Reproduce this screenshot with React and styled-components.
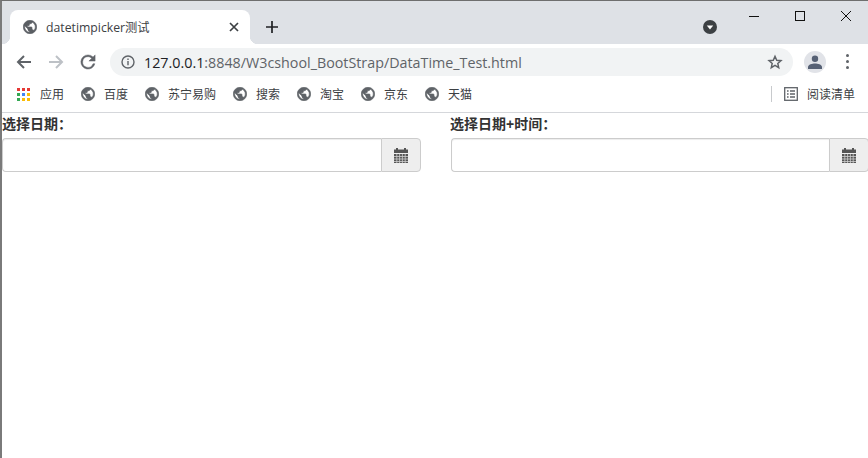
import React from "react";
import styled, { createGlobalStyle } from "styled-components";

const GlobalStyle = createGlobalStyle`
  html, body {
    margin: 0;
    padding: 0;
    background: #fff;
    overflow: hidden;
  }
  body {
    font-family: "Open Sans", "Noto Sans CJK SC", sans-serif;
  }
`;

const bookmarks = ["百度", "苏宁易购", "搜索", "淘宝", "京东", "天猫"];
const appColors = ["#e53935", "#e53935", "#e53935", "#34a853", "#4285f4", "#fbbc05", "#34a853", "#fbbc05", "#fbbc05"];

const Globe = ({ size = 14, color = "#5f6368" }) => (
  <svg width={size} height={size} viewBox="1.5 1.5 21 21" fill={color} stroke={color} strokeWidth="1">
    <path d="M12 2C6.48 2 2 6.48 2 12s4.48 10 10 10 10-4.48 10-10S17.52 2 12 2zm-1 17.93c-3.95-.49-7-3.85-7-7.93 0-.62.08-1.21.21-1.79L9 15v1c0 1.1.9 2 2 2v1.93zm6.9-2.54c-.26-.81-1-1.39-1.9-1.39h-1v-3c0-.55-.45-1-1-1H8v-2h2c.55 0 1-.45 1-1V7h2c1.1 0 2-.9 2-2v-.41c2.93 1.19 5 4.06 5 7.41 0 2.08-.8 3.97-2.1 5.39z" />
  </svg>
);

const CalendarIcon = () => (
  <svg width="14" height="15" viewBox="0 0 14 15">
    <rect x="2" y="0" width="2" height="3" fill="#555" />
    <rect x="10" y="0" width="2" height="3" fill="#555" />
    <rect x="0" y="1.5" width="14" height="3.5" fill="#555" />
    <rect x="0" y="6" width="14" height="9" fill="#555" />
    <path d="M0 8.5h14M0 11h14M0 13.5h14M2.8 6v9M5.6 6v9M8.4 6v9M11.2 6v9" stroke="#cfcfcf" strokeWidth="0.8" />
  </svg>
);

function App() {
  return (
    <Win>
      <GlobalStyle />
      <TabStrip>
        <Tab>
          <Globe size={14} color="#5a5e63" />
          <TabTitle>datetimpicker测试</TabTitle>
          <svg width="10" height="10" viewBox="0 0 10 10" stroke="#3c4043" strokeWidth="1.7">
            <path d="M1 1l8 8M9 1l-8 8" />
          </svg>
        </Tab>
        <NewTab>
          <svg width="12" height="12" viewBox="0 0 12 12" stroke="#202124" strokeWidth="1.7">
            <path d="M6 0v12M0 6h12" />
          </svg>
        </NewTab>
        <TabSearch>
          <svg width="14" height="14" viewBox="0 0 14 14">
            <circle cx="7" cy="7" r="7" fill="#3c4043" />
            <path d="M3.8 5.6h6.4L7 9.4z" fill="#fff" />
          </svg>
        </TabSearch>
        <WinControls>
          <svg width="10" height="10" viewBox="0 0 10 10" stroke="#111" strokeWidth="1">
            <path d="M0 5.5h10" />
          </svg>
          <svg width="10" height="10" viewBox="0 0 10 10" stroke="#111" strokeWidth="1" fill="none">
            <rect x="0.5" y="0.5" width="9" height="9" />
          </svg>
          <svg width="10" height="10" viewBox="0 0 10 10" stroke="#111" strokeWidth="1">
            <path d="M0 0l10 10M10 0L0 10" />
          </svg>
        </WinControls>
      </TabStrip>

      <Toolbar>
        <NavIcon>
          <svg width="16" height="16" viewBox="0 0 16 16" fill="none" stroke="#5f6368" strokeWidth="2">
            <path d="M15 8H2M8 2L2 8l6 6" />
          </svg>
        </NavIcon>
        <NavIcon>
          <svg width="16" height="16" viewBox="0 0 16 16" fill="none" stroke="#bdc1c6" strokeWidth="2">
            <path d="M1 8h13M8 2l6 6-6 6" />
          </svg>
        </NavIcon>
        <NavIcon>
          <svg width="16" height="16" viewBox="3 3 18 18" fill="#5f6368" stroke="#5f6368" strokeWidth="0.5">
            <path d="M17.65 6.35A7.96 7.96 0 0 0 12 4a8 8 0 1 0 7.73 10h-2.08A6 6 0 1 1 12 6c1.66 0 3.14.69 4.22 1.78L13 11h7V4l-2.35 2.35z" />
          </svg>
        </NavIcon>
        <Omnibox>
          <svg width="14" height="14" viewBox="0 0 14 14" fill="none" stroke="#5f6368" strokeWidth="1.4">
            <circle cx="7" cy="7" r="6" />
            <path d="M7 6v4.2M7 3.5v1.4" />
          </svg>
          <Url>
            127.0.0.1<UrlMuted>:8848/W3cshool_BootStrap/DataTime_Test.html</UrlMuted>
          </Url>
          <svg width="16" height="16" viewBox="0 0 24 24" fill="none" stroke="#5f6368" strokeWidth="2.2" strokeLinejoin="miter">
            <path d="M12 3.5l2.6 5.9 6.4.6-4.8 4.2 1.4 6.3L12 17.2l-5.6 3.3 1.4-6.3L3 10l6.4-.6z" />
          </svg>
        </Omnibox>
        <Avatar>
          <svg width="14" height="14" viewBox="0 0 14 14" fill="#566074">
            <circle cx="7" cy="3.8" r="3.2" />
            <path d="M0 14v-2c0-2.6 4.4-3.6 7-3.6s7 1 7 3.6v2z" />
          </svg>
        </Avatar>
        <Dots>
          <Dot />
          <Dot />
          <Dot />
        </Dots>
      </Toolbar>

      <BookmarkBar>
        <Apps>
          {appColors.map((c, i) => (
            <AppCell key={i} $color={c} />
          ))}
        </Apps>
        <AppsLabel>应用</AppsLabel>
        {bookmarks.map((b) => (
          <Bookmark key={b}>
            <Globe />
            <span>{b}</span>
          </Bookmark>
        ))}
        <ReadingList>
          <svg width="14" height="14" viewBox="0 0 14 14" fill="none" stroke="#5f6368" strokeWidth="1.3">
            <rect x="0.7" y="0.7" width="12.6" height="12.6" />
            <path d="M3 4h1.6M6 4h5M3 7h1.6M6 7h5M3 10h1.6M6 10h5" />
          </svg>
          <span>阅读清单</span>
        </ReadingList>
      </BookmarkBar>

      <Page>
        <Field>
          <Label>选择日期：</Label>
          <InputGroup>
            <Input type="text" />
            <Addon>
              <CalendarIcon />
            </Addon>
          </InputGroup>
        </Field>
        <Field $second>
          <Label>选择日期+时间：</Label>
          <InputGroup $second>
            <Input type="text" />
            <Addon>
              <CalendarIcon />
            </Addon>
          </InputGroup>
        </Field>
      </Page>
    </Win>
  );
}

const Win = styled.div`
  width: 868px;
  height: 458px;
  box-sizing: border-box;
  border-top: 1px solid #6e6e6e;
  border-left: 2px solid #7a7a7a;
  display: flex;
  flex-direction: column;
  overflow: hidden;
  background: #fff;
`;

const TabStrip = styled.div`
  height: 43px;
  flex: none;
  background: #dee1e6;
  display: flex;
  align-items: flex-end;
  padding-left: 8px;
`;

const Tab = styled.div`
  position: relative;
  width: 240px;
  height: 34px;
  box-sizing: border-box;
  background: #fff;
  border-radius: 8px 8px 0 0;
  display: flex;
  align-items: center;
  padding: 0 11px 0 13px;
  &::before,
  &::after {
    content: "";
    position: absolute;
    bottom: 0;
    width: 8px;
    height: 8px;
  }
  &::before {
    left: -8px;
    background: radial-gradient(circle at 0 0, #dee1e6 8px, #fff 8.5px);
  }
  &::after {
    right: -8px;
    background: radial-gradient(circle at 100% 0, #dee1e6 8px, #fff 8.5px);
  }
`;

const TabTitle = styled.span`
  flex: 1;
  margin-left: 9px;
  font-size: 12.25px;
  color: #3c4043;
  white-space: nowrap;
`;

const NewTab = styled.div`
  width: 12px;
  height: 12px;
  margin: 0 0 11px 16px;
  display: flex;
`;

const TabSearch = styled.div`
  margin: 0 0 10px 425px;
  display: flex;
`;

const WinControls = styled.div`
  align-self: flex-start;
  margin: 10px 0 0 32px;
  display: flex;
  gap: 36px;
  svg {
    display: block;
  }
`;

const Toolbar = styled.div`
  height: 32px;
  flex: none;
  display: flex;
  align-items: flex-end;
  padding-left: 6px;
`;

const NavIcon = styled.div`
  width: 32px;
  height: 28px;
  display: flex;
  align-items: center;
  justify-content: flex-start;
  padding-left: 8px;
  box-sizing: border-box;
`;

const Omnibox = styled.div`
  width: 683px;
  height: 28px;
  margin-left: 6px;
  box-sizing: border-box;
  background: #f1f3f4;
  border-radius: 14px;
  display: flex;
  align-items: center;
  padding: 0 10px 0 11px;
`;

const Url = styled.span`
  flex: 1;
  margin-left: 9px;
  font-size: 14.3px;
  color: #202124;
  white-space: nowrap;
`;

const UrlMuted = styled.span`
  color: #5f6368;
`;

const Avatar = styled.div`
  width: 22px;
  height: 22px;
  margin: 0 0 3px 11px;
  border-radius: 50%;
  background: #e1e3e8;
  display: flex;
  align-items: center;
  justify-content: center;
`;

const Dots = styled.div`
  margin: 0 0 7px 20px;
  display: flex;
  flex-direction: column;
  gap: 3px;
`;

const Dot = styled.i`
  display: block;
  width: 3px;
  height: 3px;
  border-radius: 50%;
  background: #5f6368;
`;

const BookmarkBar = styled.div`
  height: 37px;
  flex: none;
  box-sizing: border-box;
  border-bottom: 1px solid #d5d7db;
  display: flex;
  align-items: center;
  padding-left: 15px;
  font-size: 12px;
  color: #3c4043;
`;

const Apps = styled.div`
  display: grid;
  grid-template-columns: repeat(3, 3px);
  grid-auto-rows: 3px;
  gap: 2px;
`;

const AppCell = styled.i`
  display: block;
  background: ${(p) => p.$color};
`;

const AppsLabel = styled.span`
  margin: 0 17px 0 10px;
`;

const Bookmark = styled.div`
  display: flex;
  align-items: center;
  gap: 9px;
  margin-right: 17px;
`;

const ReadingList = styled.div`
  margin-left: auto;
  margin-right: 13px;
  height: 16px;
  padding-left: 12px;
  border-left: 1px solid #c8cacd;
  display: flex;
  align-items: center;
  gap: 9px;
`;

const Page = styled.div`
  flex: 1;
  display: flex;
  font-family: "Liberation Sans", "Noto Sans CJK SC", sans-serif;
  color: #333;
`;

const Field = styled.div`
  width: 419px;
  margin-left: ${(p) => (p.$second ? "29px" : "0")};
  flex: none;
`;

const Label = styled.div`
  height: 25px;
  font-size: 14px;
  font-weight: 700;
  line-height: 22px;
`;

const InputGroup = styled.div`
  display: flex;
  height: 34px;
  margin-left: ${(p) => (p.$second ? "1px" : "0")};
`;

const Input = styled.input`
  flex: 1;
  min-width: 0;
  height: 34px;
  box-sizing: border-box;
  padding: 6px 12px;
  border: 1px solid #ccc;
  border-right: 0;
  border-radius: 4px 0 0 4px;
  box-shadow: inset 0 1px 1px rgba(0, 0, 0, 0.075);
  outline: none;
`;

const Addon = styled.div`
  width: 40px;
  box-sizing: border-box;
  border: 1px solid #ccc;
  border-radius: 0 4px 4px 0;
  background: #eee;
  color: #555;
  display: flex;
  align-items: center;
  justify-content: center;
`;

export default App;
